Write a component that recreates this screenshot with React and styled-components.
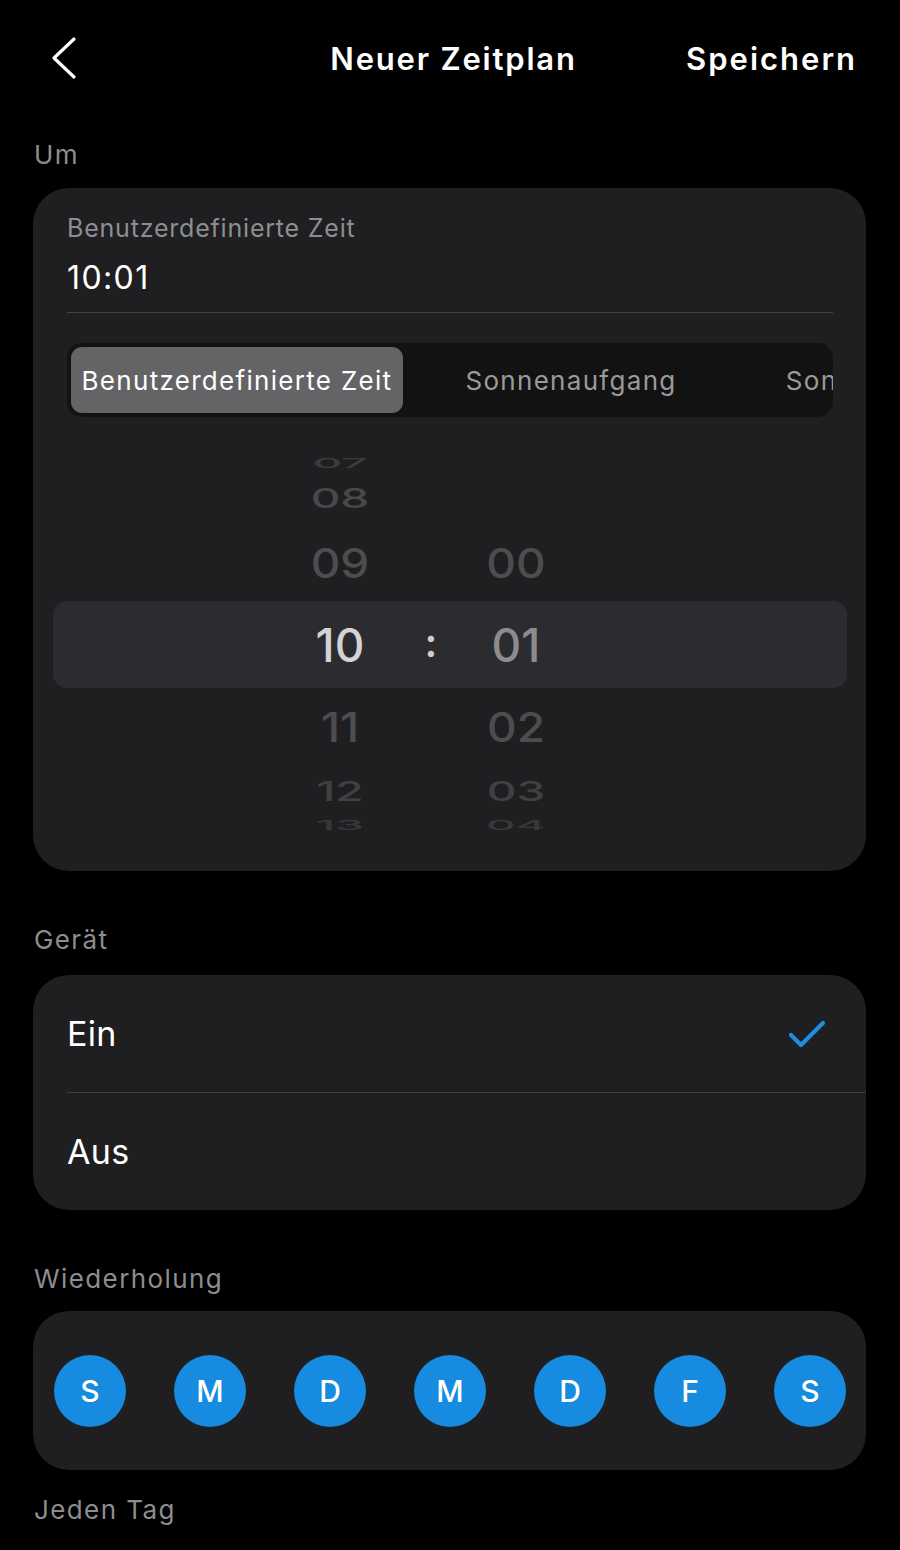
import React from 'react';
import styled, { createGlobalStyle } from 'styled-components';

const GlobalStyle = createGlobalStyle`
  html, body {
    margin: 0;
    padding: 0;
    background: #000;
  }
  body {
    font-family: Inter, "Noto Sans", "Liberation Sans", sans-serif;
    color: #fff;
    -webkit-font-smoothing: antialiased;
  }
`;

const Screen = styled.div`
  width: 900px;
  min-height: 1550px;
  background: #000;
  display: flex;
  flex-direction: column;
  overflow: hidden;
`;

const Header = styled.header`
  height: 116px;
  display: grid;
  grid-template-columns: 1fr auto 1fr;
  align-items: center;
  padding: 0 43px 0 50px;
`;

const BackButton = styled.button`
  justify-self: start;
  background: none;
  border: none;
  padding: 0;
  width: 32px;
  height: 44px;
  display: flex;
  align-items: center;
  cursor: pointer;
`;

const Title = styled.h1`
  margin: 0;
  font-size: 31px;
  font-weight: 600;
  letter-spacing: 1.8px;
  color: #fff;
`;

const SaveButton = styled.button`
  justify-self: end;
  background: none;
  border: none;
  padding: 0;
  font-family: inherit;
  font-size: 31px;
  font-weight: 600;
  letter-spacing: 2px;
  color: #fff;
  cursor: pointer;
`;

const SectionLabel = styled.div`
  padding: 0 34px;
  height: 34px;
  line-height: 34px;
  font-size: 26px;
  letter-spacing: 1.4px;
  color: #8d8d90;
  margin-top: ${p => p.$top}px;
  margin-bottom: ${p => p.$bottom ?? 16}px;
`;

const Card = styled.section`
  margin: 0 34px 0 33px;
  background: #1f1f21;
  border-radius: 36px;
  overflow: hidden;
`;

const TimeCard = styled(Card)`
  padding: 22px 33px 37px 34px;
`;

const FieldLabel = styled.div`
  font-size: 25px;
  line-height: 36px;
  letter-spacing: 0.8px;
  color: #8e8e92;
`;

const FieldValue = styled.div`
  margin-top: 8px;
  font-size: 32px;
  line-height: 48px;
  letter-spacing: 1.4px;
  color: #fff;
  padding-bottom: 10px;
  border-bottom: 1.5px solid #434346;
`;

const Segmented = styled.div`
  margin-top: 30px;
  height: 74px;
  padding: 4px;
  box-sizing: border-box;
  background: #121213;
  border-radius: 15px;
  display: flex;
  gap: 2px;
  overflow: hidden;
`;

const Segment = styled.div`
  flex: 0 0 332px;
  border-radius: 11px;
  background: ${p => (p.$active ? '#646466' : 'transparent')};
  color: ${p => (p.$active ? '#fff' : '#9a9a9d')};
  font-size: 26px;
  letter-spacing: 1.3px;
  display: flex;
  align-items: center;
  justify-content: center;
  white-space: nowrap;
`;

const Picker = styled.div`
  margin: 38px -14px 0 -14px;
  display: flex;
  flex-direction: column;
`;

const PickerRow = styled.div`
  height: ${p => p.$h}px;
  display: grid;
  grid-template-columns: 120px 62px 108px;
  grid-template-rows: minmax(0, 1fr);
  padding-left: 227px;
  align-items: center;
  overflow: hidden;
  border-radius: 14px;
  background: ${p => (p.$selected ? '#2c2c30' : 'transparent')};
`;

const Digit = styled.span`
  text-align: center;
  font-size: 46px;
  font-weight: 500;
  line-height: 46px;
  color: ${p => p.$color};
  transform: scaleY(${p => p.$squash});
`;

const Colon = styled.span`
  text-align: center;
  font-size: 40px;
  font-weight: 600;
  color: #cfcfd1;
  line-height: 1;
  transform: translateY(-2px);
`;

const OptionRow = styled.div`
  height: 117px;
  display: flex;
  align-items: center;
  justify-content: space-between;
  margin-left: 34px;
  padding-right: 40px;
  font-size: 34px;
  letter-spacing: 0.3px;
  color: #fff;
  & + & {
    border-top: 1.5px solid #3e3e41;
  }
`;

const DaysCard = styled(Card)`
  padding: 44px 20px 43px 21px;
  display: flex;
  justify-content: space-between;
`;

const DayDot = styled.div`
  width: 72px;
  height: 72px;
  border-radius: 50%;
  background: #168be0;
  color: #fff;
  font-size: 30px;
  font-weight: 500;
  display: flex;
  align-items: center;
  justify-content: center;
`;

const rows = [
  { h: 16, hour: '07', min: '', squash: 0.3, color: '#3c3c3f' },
  { h: 54, hour: '08', min: '', squash: 0.58, color: '#48484a' },
  { h: 76, hour: '09', min: '00', squash: 0.88, color: '#4d4d50' },
  { h: 87, hour: '10', min: '01', squash: 1, selected: true },
  { h: 78, hour: '11', min: '02', squash: 0.88, color: '#4d4d50' },
  { h: 50, hour: '12', min: '03', squash: 0.58, color: '#404043' },
  { h: 18, hour: '13', min: '04', squash: 0.28, color: '#38383b' },
];

const days = ['S', 'M', 'D', 'M', 'D', 'F', 'S'];

function ChevronLeft() {
  return (
    <svg width="28" height="44" viewBox="0 0 28 44" fill="none">
      <path d="M24 3 L4 22 L24 41" stroke="#fff" strokeWidth="3.2" strokeLinecap="round" strokeLinejoin="round" />
    </svg>
  );
}

function Check() {
  return (
    <svg width="38" height="30" viewBox="0 0 38 30" fill="none">
      <path d="M3 16 L13 26 L35 4" stroke="#1a8fe3" strokeWidth="4.2" strokeLinecap="round" strokeLinejoin="round" />
    </svg>
  );
}

export default function App() {
  return (
    <Screen>
      <GlobalStyle />
      <Header>
        <BackButton aria-label="Zurück">
          <ChevronLeft />
        </BackButton>
        <Title>Neuer Zeitplan</Title>
        <SaveButton>Speichern</SaveButton>
      </Header>

      <SectionLabel $top={22}>Um</SectionLabel>
      <TimeCard>
        <FieldLabel>Benutzerdefinierte Zeit</FieldLabel>
        <FieldValue>10:01</FieldValue>
        <Segmented>
          <Segment $active>Benutzerdefinierte Zeit</Segment>
          <Segment>Sonnenaufgang</Segment>
          <Segment>Sonnenuntergang</Segment>
        </Segmented>
        <Picker>
          {rows.map(r => (
            <PickerRow key={r.hour} $h={r.h} $selected={r.selected}>
              <Digit $squash={r.squash} $color={r.selected ? '#d3d3d5' : r.color}>
                {r.hour}
              </Digit>
              {r.selected ? <Colon>:</Colon> : <span />}
              <Digit $squash={r.squash} $color={r.selected ? '#8c8c8f' : r.color}>
                {r.min}
              </Digit>
            </PickerRow>
          ))}
        </Picker>
      </TimeCard>

      <SectionLabel $top={52} $bottom={18}>Gerät</SectionLabel>
      <Card>
        <OptionRow>
          Ein
          <Check />
        </OptionRow>
        <OptionRow>Aus</OptionRow>
      </Card>

      <SectionLabel $top={52} $bottom={15}>Wiederholung</SectionLabel>
      <DaysCard>
        {days.map((d, i) => (
          <DayDot key={i}>{d}</DayDot>
        ))}
      </DaysCard>

      <SectionLabel $top={23}>Jeden Tag</SectionLabel>
    </Screen>
  );
}
